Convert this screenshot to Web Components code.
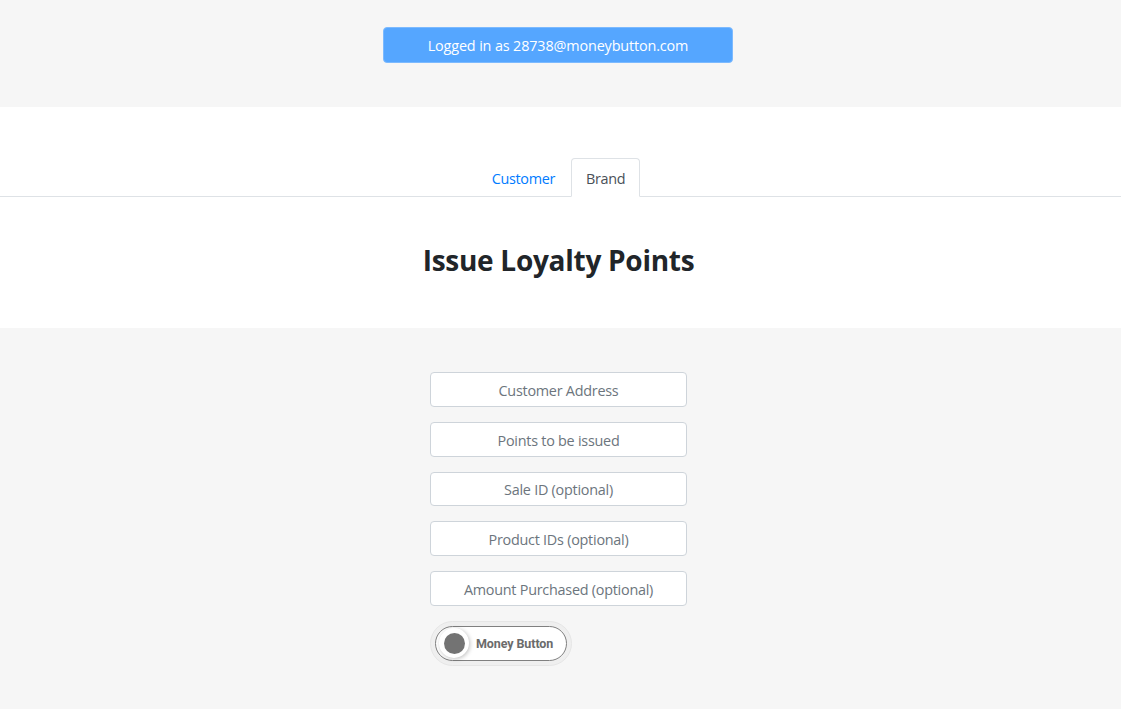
<!DOCTYPE html>
<html>
<head>
<meta charset="utf-8">
<title>Issue Loyalty Points</title>
<style>
  html { background: #fff; height: 100%; }
  body { margin: 0; width: 1121px; height: 100%; background: #f6f6f6; font-family: "Open Sans", "Noto Sans", sans-serif; overflow: hidden; }
</style>
</head>
<body>
<loyalty-app></loyalty-app>

<script>
class LoginBar extends HTMLElement {
  constructor() {
    super();
    this.attachShadow({ mode: 'open' });
    this.shadowRoot.innerHTML = `
      <style>
        :host { display: flex; justify-content: center; height: 107px; padding: 27px 5px 0 0; box-sizing: border-box; }
        .status {
          width: 350px; height: 36px; box-sizing: border-box;
          display: flex; align-items: center; justify-content: center;
          background: #55a6ff; border: 1px solid #7cbaff; border-radius: 4px;
          color: #fff; font-size: 14.4px; letter-spacing: -0.14px;
        }
      </style>
      <div class="status"><slot></slot></div>
    `;
  }
}

class TabBar extends HTMLElement {
  constructor() {
    super();
    this.attachShadow({ mode: 'open' });
    this.shadowRoot.innerHTML = `
      <style>
        :host { display: flex; justify-content: center; height: 39px; margin-top: 51px; padding-right: 5px; box-sizing: border-box; border-bottom: 1px solid #dee2e6; }
        .tab {
          height: 39px; box-sizing: border-box; padding: 1px 15px 0;
          display: flex; align-items: center;
          border: 1px solid transparent; border-radius: 4px 4px 0 0;
          font-size: 14.4px; letter-spacing: -0.3px; color: #007bff;
        }
        .active { padding: 1px 14px 0; color: #495057; background: #fff; border-color: #dee2e6 #dee2e6 #fff; }
      </style>
      <div class="tab">Customer</div>
      <div class="tab active">Brand</div>
    `;
  }
}

class TextField extends HTMLElement {
  constructor() {
    super();
    this.attachShadow({ mode: 'open' });
    this.shadowRoot.innerHTML = `
      <style>
        :host { display: block; width: 257px; height: 34.85px; }
        input {
          display: block; width: 100%; height: 100%; box-sizing: border-box; margin: 0; padding: 2px 4px 0;
          background: #fff; border: 1px solid #ced4da; border-radius: 4px;
          font: 14.4px "Open Sans", "Noto Sans", sans-serif; letter-spacing: -0.25px;
          text-align: center; color: #495057; outline: none;
        }
        input::placeholder { color: #6c757d; opacity: 1; }
      </style>
      <input type="text">
    `;
    this.shadowRoot.querySelector('input').placeholder = this.getAttribute('placeholder') || '';
  }
}

class MoneyToggle extends HTMLElement {
  constructor() {
    super();
    this.attachShadow({ mode: 'open' });
    this.shadowRoot.innerHTML = `
      <style>
        :host { display: block; width: 142px; height: 45px; box-sizing: border-box; padding: 4px; background: #efefef; border: 1px solid #e6e6e6; border-radius: 23px; }
        .pill {
          height: 100%; box-sizing: border-box; display: flex; align-items: center;
          padding-left: 3px; background: #fff; border: 1px solid #808080; border-radius: 18px;
        }
        .knob {
          width: 30px; height: 30px; box-sizing: border-box; flex: none; border-radius: 50%;
          background: #fff; box-shadow: 1px 1px 4px rgba(0,0,0,.25);
          display: flex; align-items: center; justify-content: center;
        }
        .knob i { display: block; width: 21px; height: 21px; border-radius: 50%; background: #737373; }
        .label { margin-left: 7px; font: 700 12.5px "Roboto", "Liberation Sans", sans-serif; letter-spacing: -0.1px; color: #6b6b6b; white-space: nowrap; }
      </style>
      <div class="pill"><div class="knob"><i></i></div><span class="label">Money Button</span></div>
    `;
  }
}

class LoyaltyApp extends HTMLElement {
  constructor() {
    super();
    this.attachShadow({ mode: 'open' });
    this.shadowRoot.innerHTML = `
      <style>
        :host { display: block; }
        .white { background: #fff; height: 221px; display: flex; flex-direction: column; }
        h1 { margin: 43px 4px 0 0; text-align: center; font-size: 28px; line-height: 40px; font-weight: 700; letter-spacing: -0.28px; color: #212529; }
        form { width: 257px; margin: 44px 0 0 430px; display: flex; flex-direction: column; gap: 14.95px; }
      </style>
      <login-bar>Logged in as 28738@moneybutton.com</login-bar>
      <div class="white">
        <tab-bar></tab-bar>
        <h1>Issue Loyalty Points</h1>
      </div>
      <form>
        <text-field placeholder="Customer Address"></text-field>
        <text-field placeholder="Points to be issued"></text-field>
        <text-field placeholder="Sale ID (optional)"></text-field>
        <text-field placeholder="Product IDs (optional)"></text-field>
        <text-field placeholder="Amount Purchased (optional)"></text-field>
        <money-toggle></money-toggle>
      </form>
    `;
  }
}

customElements.define('login-bar', LoginBar);
customElements.define('tab-bar', TabBar);
customElements.define('text-field', TextField);
customElements.define('money-toggle', MoneyToggle);
customElements.define('loyalty-app', LoyaltyApp);
</script>
</body>
</html>
